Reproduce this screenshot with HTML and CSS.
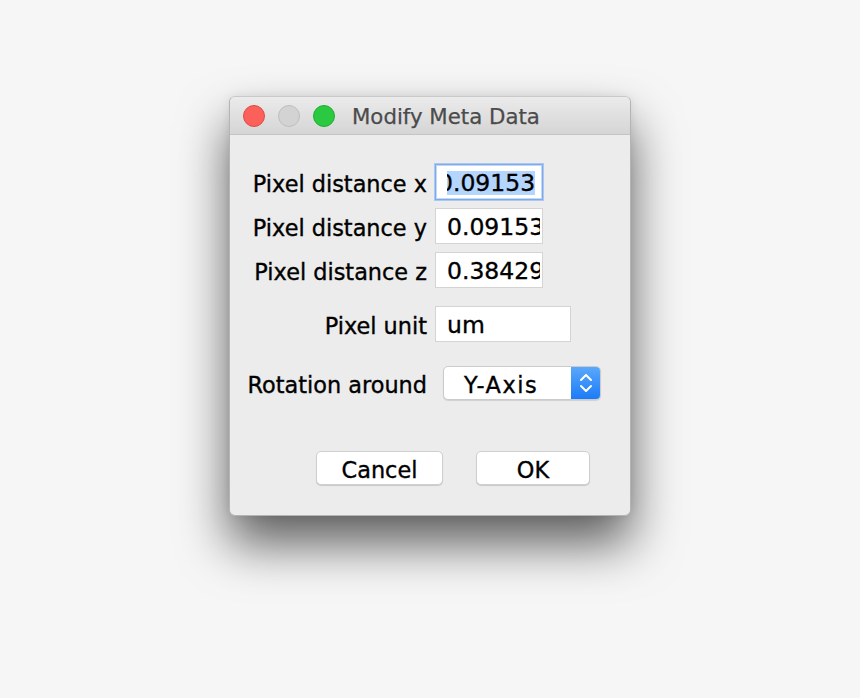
FILE: index.html
```html
<!doctype html>
<html>

<head>
    <meta charset="utf-8">
    <title>Modify Meta Data</title>
    <link rel="stylesheet" href="styles.css">
</head>

<body>
    <div class="stage">
        <div class="dialog">
            <!-- window title bar -->
            <div class="titlebar">
                <span class="light red"></span>
                <span class="light grey"></span>
                <span class="light green"></span>
                <span class="title">Modify Meta Data</span>
            </div>

            <div class="form">
                <div class="row">
                    <label class="label">Pixel distance x</label>
                    <div class="field focus"><span class="text"><span class="selected">0.09153</span></span></div>
                </div>
                <div class="row">
                    <label class="label">Pixel distance y</label>
                    <div class="field"><span class="text">0.091534</span></div>
                </div>
                <div class="row">
                    <label class="label">Pixel distance z</label>
                    <div class="field"><span class="text">0.384295</span></div>
                </div>
                <div class="row unit">
                    <label class="label">Pixel unit</label>
                    <div class="field wide"><span class="text">um</span></div>
                </div>
                <div class="row rotation">
                    <label class="label">Rotation around</label>
                    <div class="select">
                        <span class="select-text">Y-Axis</span>
                        <span class="stepper">
                            <svg width="14" height="22" viewBox="0 0 14 22">
                                <path d="M2 8 L7 3 L12 8" fill="none" stroke="#fff" stroke-width="2" stroke-linecap="round" stroke-linejoin="round"/>
                                <path d="M2 14 L7 19 L12 14" fill="none" stroke="#fff" stroke-width="2" stroke-linecap="round" stroke-linejoin="round"/>
                            </svg>
                        </span>
                    </div>
                </div>
            </div>

            <div class="buttons">
                <div class="button cancel">Cancel</div>
                <div class="button ok">OK</div>
            </div>
        </div>
    </div>
</body>

</html>
```

FILE: styles.css
```css
/* Page */

body {
    margin: 0;
    background: #f6f6f6;
    font-family: "DejaVu Sans", Verdana, sans-serif;
}

.stage {
    min-height: 698px;
    box-sizing: border-box;
    padding: 96px 0 0 229px;
}

/* Window */

.dialog {
    width: 402px;
    height: 420px;
    box-sizing: border-box;
    border: 1px solid #b4b4b4;
    border-top-color: #c9c9c9;
    border-radius: 6px;
    background: #ececec;
    box-shadow: 0 28px 50px rgba(0, 0, 0, 0.62), 0 0 10px rgba(0, 0, 0, 0.08);
    overflow: hidden;
}

.titlebar {
    height: 37px;
    border-bottom: 1px solid #c4c4c4;
    background: linear-gradient(#ebebeb, #d5d5d5);
    display: flex;
    align-items: center;
    padding-left: 13px;
}

.light {
    width: 20px;
    height: 20px;
    border-radius: 50%;
    border: 1px solid;
    margin-right: 13px;
}

.red {
    background: #fc605b;
    border-color: #de4a43;
}

.grey {
    background: #d3d3d3;
    border-color: #bebebe;
}

.green {
    background: #2ac941;
    border-color: #1eae2e;
    margin-right: 17px;
}

.title {
    padding-top: 2px;
    font-size: 21.3px;
    color: #4b4b4b;
    -webkit-text-stroke: 0.25px #4b4b4b;
}

/* Form rows */

.form {
    padding-top: 29px;
}

.row {
    display: flex;
    align-items: center;
    height: 36px;
    margin-bottom: 8px;
}

.row.unit {
    margin-top: 18px;
}

.row.rotation {
    margin-top: 24px;
    height: 34px;
}

.label {
    width: 197px;
    padding-top: 4px;
    text-align: right;
    font-size: 22.4px;
    color: #000;
    -webkit-text-stroke: 0.35px #000;
}

.field {
    width: 108px;
    height: 36px;
    box-sizing: border-box;
    margin-left: 8px;
    border: 1px solid #d4d4d4;
    background: #fff;
    padding: 2px 2px 0 11px;
    display: flex;
    align-items: center;
    overflow: hidden;
    font-size: 23.5px;
    color: #000;
    -webkit-text-stroke: 0.35px #000;
}

.field.wide {
    width: 136px;
}

.field.focus {
    border: 1px solid #7fa9e8;
    box-shadow: 0 0 0 1px #a9c8f3, inset 0 0 0 1px #c2d8f7;
}

.text {
    white-space: nowrap;
    overflow: hidden;
    flex: 1;
}

.selected {
    display: inline-block;
    margin-left: -9px;
    background: #b4d5fe;
    line-height: 24px;
}

/* Popup button */

.select {
    width: 158px;
    height: 34px;
    box-sizing: border-box;
    margin-left: 16px;
    border: 1px solid #cbcbcb;
    border-radius: 5px;
    background: #fff;
    box-shadow: 0 1px 1px rgba(0, 0, 0, 0.12);
    display: flex;
    align-items: center;
    overflow: hidden;
}

.select-text {
    flex: 1;
    padding: 3px 0 0 20px;
    font-size: 22.4px;
    letter-spacing: 1.5px;
    color: #000;
    -webkit-text-stroke: 0.35px #000;
}

.stepper {
    width: 29px;
    align-self: stretch;
    background: linear-gradient(#5aa8fb, #1b7bf8);
    display: flex;
    align-items: center;
    justify-content: center;
}

/* Buttons */

.buttons {
    display: flex;
    padding: 43px 0 0 86px;
}

.button {
    height: 34px;
    box-sizing: border-box;
    padding-top: 3px;
    border: 1px solid #cfcfcf;
    border-radius: 5px;
    background: #fff;
    box-shadow: 0 1px 1px rgba(0, 0, 0, 0.15);
    display: flex;
    align-items: center;
    justify-content: center;
    font-size: 22.4px;
    color: #000;
    -webkit-text-stroke: 0.35px #000;
}

.cancel {
    width: 127px;
    margin-right: 33px;
}

.ok {
    width: 114px;
}
```
